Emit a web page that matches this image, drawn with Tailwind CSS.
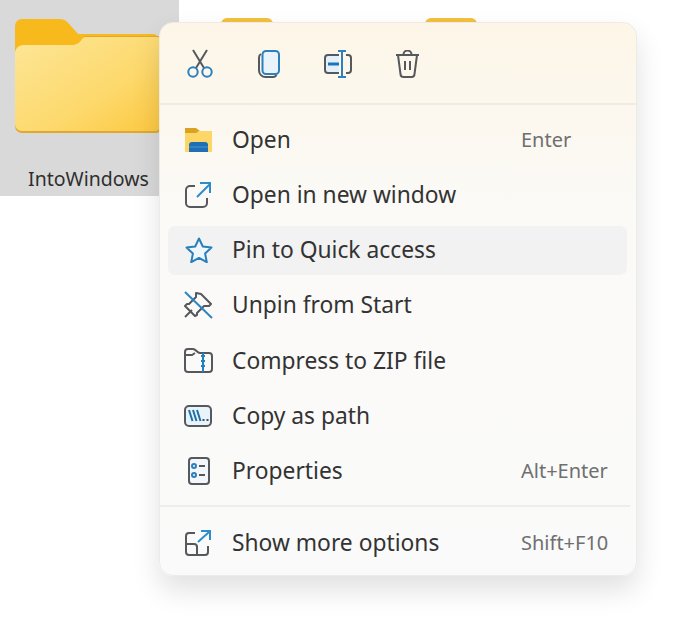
<!DOCTYPE html>
<html><head><meta charset="utf-8"><script src="https://cdn.jsdelivr.net/npm/@tailwindcss/browser@4"></script></head>
<body class="bg-white">
<div class="relative w-[700px] h-[629px] overflow-hidden bg-white font-['Noto_Sans',sans-serif] text-[#333333]">
  <!-- desktop selection with folder -->
  <div class="absolute left-0 top-0 w-[179px] h-[196px] bg-[#d9d9d9]">
    <svg class="absolute left-[14px] top-[18px]" width="150" height="118" viewBox="0 0 150 118">
      <defs>
        <linearGradient id="fg" x1="0" y1="0" x2="1" y2="1"><stop offset="0" stop-color="#fde697"/><stop offset="0.6" stop-color="#fdd96d"/><stop offset="1" stop-color="#fcc840"/></linearGradient>
      </defs>
      <path d="M1 8a7 7 0 0 1 7-7h37c5 0 8 2 11 6l8 9h75a6 6 0 0 1 6 6v20H1z" fill="#f7b91c"/>
      <path d="M1 34a8 8 0 0 1 8-7h48c6 0 8-2 12-7l2-2h73a4 4 0 0 1 4 4v87a6 6 0 0 1-6 6H8a7 7 0 0 1-7-7z" fill="#e0a82e"/>
      <path d="M1 34a8 8 0 0 1 8-7h48c6 0 8-2 12-7l2-1h72a4 4 0 0 1 4 4v84a6 6 0 0 1-6 6H8a7 7 0 0 1-7-7z" fill="url(#fg)"/>
    </svg>
    <div class="absolute left-[1px] top-[166px] w-[175px] text-center text-[19.5px] leading-[26px] text-[#2f2f2f]">IntoWindows</div>
  </div>
  <div class="absolute left-[221px] top-[18px] w-[52px] h-[8px] rounded-t-[6px] bg-[#f3c03e]"></div>
  <div class="absolute left-[425px] top-[18px] w-[52px] h-[8px] rounded-t-[6px] bg-[#f3c03e]"></div>

  <!-- context menu -->
  <div class="absolute left-[159px] top-[22px] w-[478px] h-[554px] rounded-[14px] border border-[#ecebe6] bg-gradient-to-b from-[#fdf6e8] via-[#fbfaf7] via-35% to-[#fafafa] shadow-[0_14px_28px_rgba(0,0,0,0.12)] flex flex-col">
    <div class="h-[82px] shrink-0 flex items-center gap-[45px] pl-[27px] pt-[1px] border-b-2 border-[#f0ebdf]">
      <!-- cut -->
      <svg width="26" height="29" viewBox="0 0 26 29" fill="none" stroke-width="2"><path d="M6 1l11 18M20 1L9 19" stroke="#55585c"/><circle cx="6" cy="23" r="4.700" stroke="#2d7fbd"/><circle cx="20" cy="23" r="4.700" stroke="#2d7fbd"/></svg>
      <!-- copy -->
      <svg width="22" height="28" viewBox="0 0 22 28" fill="none" stroke-width="2"><path d="M3 4a4 4 0 0 0-2 3.500v13a6.500 6.500 0 0 0 6.500 6.500h8a4 4 0 0 0 3-2" stroke="#55585c"/><rect x="4.500" y="1" width="16.500" height="23" rx="3.500" fill="#e8f3fc" stroke="#2d7fbd"/></svg>
      <!-- rename -->
      <svg class="-ml-[1px]" width="28" height="28" viewBox="0 0 28 28" fill="none" stroke-width="2"><path d="M15 5H4a3 3 0 0 0-3 3v12a3 3 0 0 0 3 3h11" fill="#e3f0fb" stroke="#55585c"/><path d="M22 5h2a3 3 0 0 1 3 3v12a3 3 0 0 1-3 3h-2" stroke="#55585c"/><path d="M14 1h8M18 1v26M14 27h8" stroke="#2d7fbd"/><path d="M4 14h11" stroke="#1f74b8" stroke-width="3"/></svg>
      <!-- delete -->
      <svg class="-ml-[2px]" width="25" height="28" viewBox="0 0 25 28" fill="none" stroke-width="2" stroke="#55585c"><path d="M1 5h23M8.500 5V4.500a4 4 0 0 1 8 0V5M3 5l2.500 19a3 3 0 0 0 3 3h8a3 3 0 0 0 3-3L22 5"/><path d="M10 11v9M15 11v9"/></svg>
    </div>
    <div class="flex-1 flex flex-col px-[8px] pt-[7px]">
      <div class="h-[55.330px] flex items-center pl-[16px] pr-[18px]">
        <svg class="w-[48px] shrink-0" width="48" height="26" viewBox="0 0 48 26"><path d="M1 1h11l4 3h12v4H1z" fill="#d9a321"/><path d="M1 6h11l3-2h13v21H1z" fill="#fcd667"/><path d="M5 25v-7a3 3 0 0 1 3-3h13a3 3 0 0 1 3 3v7z" fill="#1f6fb5"/><path d="M5 20h19" stroke="#4a95d4" stroke-width="1"/></svg>
        <span class="flex-1 text-[22.800px]">Open</span><span class="w-[89px] text-[20px] text-[#6f6f6f]">Enter</span>
      </div>
      <div class="h-[55.330px] flex items-center pl-[16px] pr-[18px]">
        <svg class="w-[48px] shrink-0" width="48" height="26" viewBox="0 0 48 26" fill="none" stroke-width="2"><path d="M11 4H6a4 4 0 0 0-4 4v13a4 4 0 0 0 4 4h13a4 4 0 0 0 4-4v-5" stroke="#55585c"/><path d="M13 15L26 2M16 1h10v10" stroke="#2d8ccb"/></svg>
        <span class="flex-1 text-[22.800px]">Open in new window</span>
      </div>
      <div class="h-[49px] my-[3px] mr-[1px] flex items-center pl-[16px] pr-[18px] rounded-[7px] bg-[#f2f2f2]">
        <svg class="w-[48px] shrink-0" width="48" height="26" viewBox="0 0 48 26" fill="none"><path d="M15 1.500l3.800 8 8.700 1.100-6.400 6 1.700 8.600-7.800-4.300-7.800 4.300 1.700-8.600-6.400-6 8.700-1.100z" stroke="#2a7fba" stroke-width="2" fill="#eef5fb" stroke-linejoin="round"/></svg>
        <span class="flex-1 text-[22.800px]">Pin to Quick access</span>
      </div>
      <div class="h-[55.330px] flex items-center pl-[16px] pr-[18px]">
        <svg class="w-[48px] shrink-0" width="48" height="28" viewBox="0 0 48 28" fill="none" stroke-width="2"><path d="M17 3l10 10-2 2-5 0-7 7 0 2-2 1-10-10 2-2 2 0 7-7 0-4z" stroke="#55585c" stroke-linejoin="round"/><path d="M8 19l-7 7" stroke="#55585c"/><path d="M1 1l27 26" stroke="#2a86c2"/></svg>
        <span class="flex-1 text-[22.800px]">Unpin from Start</span>
      </div>
      <div class="h-[55.330px] flex items-center pl-[16px] pr-[18px]">
        <svg class="w-[48px] shrink-0" width="48" height="26" viewBox="0 0 48 26" fill="none" stroke-width="2"><path d="M1 4a3 3 0 0 1 3-3h5c3 0 4 4 7 4h9a3 3 0 0 1 3 3v13a3 3 0 0 1-3 3H4a3 3 0 0 1-3-3zM1 7h7l3-2" stroke="#55585c"/><path d="M19 5v19M17 8h4M17 13h4M17 18h4" stroke="#1f82c4"/></svg>
        <span class="flex-1 text-[22.800px]">Compress to ZIP file</span>
      </div>
      <div class="h-[55.330px] flex items-center pl-[16px] pr-[18px]">
        <svg class="w-[48px] shrink-0" width="48" height="22" viewBox="0 0 48 22" fill="none" stroke-width="2"><rect x="1" y="1" width="26" height="20" rx="4" fill="#e8f3fa" stroke="#55585c"/><path d="M5 5l3.500 11M9 5l3.500 11M13 5l3.500 11" stroke="#1f6fa8"/><path d="M18.500 15h2M22.500 15h2" stroke="#3b5263"/></svg>
        <span class="flex-1 text-[22.800px]">Copy as path</span>
      </div>
      <div class="h-[55.330px] flex items-center pl-[16px] pr-[18px]">
        <svg class="w-[48px] shrink-0" width="48" height="28" viewBox="0 0 48 28" fill="none" stroke-width="2"><rect x="5" y="1" width="20" height="26" rx="3" fill="#f4f7fa" stroke="#55585c"/><circle cx="10" cy="9" r="2" stroke="#2d7fbd"/><circle cx="10" cy="18" r="2" stroke="#2d7fbd"/><path d="M15 9h6M15 18h6" stroke="#55585c"/></svg>
        <span class="flex-1 text-[22.800px]">Properties</span><span class="w-[89px] text-[20px] text-[#6f6f6f]">Alt+Enter</span>
      </div>
      <div class="h-[2px] mt-[6px] mb-[8px] -ml-[8px] -mr-[2px] bg-[#ededed]"></div>
      <div class="h-[55.330px] flex items-center pl-[16px] pr-[18px]">
        <svg class="w-[48px] shrink-0" width="48" height="26" viewBox="0 0 48 26" fill="none" stroke-width="2"><path d="M11 3H5a3 3 0 0 0-3 3v16a3 3 0 0 0 3 3h16a3 3 0 0 0 3-3v-6M2 14h8a3 3 0 0 1 3 3v8" stroke="#55585c"/><path d="M14 12L25 2M17 1h9v9" stroke="#2d8ccb"/></svg>
        <span class="flex-1 text-[22.800px]">Show more options</span><span class="w-[89px] text-[20px] text-[#6f6f6f]">Shift+F10</span>
      </div>
    </div>
  </div>
</div>
</body></html>
